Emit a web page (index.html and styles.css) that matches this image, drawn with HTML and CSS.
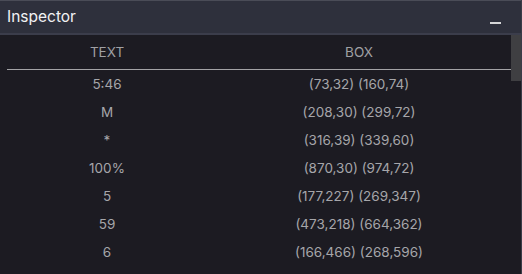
FILE: index.html
```html
<!DOCTYPE html>
<html>
<head>
<meta charset="utf-8">
<link rel="stylesheet" href="styles.css">
</head>
<body>
<div class="panel">
  <div class="titlebar">
    <span class="title">Inspector</span>
    <span class="minimize"></span>
  </div>
  <div class="body">
    <div class="scroll">
      <table class="grid">
        <thead>
          <tr><th class="c1">TEXT</th><th class="c2">BOX</th></tr>
        </thead>
        <tbody>
          <tr><td>5:46</td><td>(73,32) (160,74)</td></tr>
          <tr><td>M</td><td>(208,30) (299,72)</td></tr>
          <tr><td>*</td><td>(316,39) (339,60)</td></tr>
          <tr><td>100%</td><td>(870,30) (974,72)</td></tr>
          <tr><td>5</td><td>(177,227) (269,347)</td></tr>
          <tr><td>59</td><td>(473,218) (664,362)</td></tr>
          <tr><td>6</td><td>(166,466) (268,596)</td></tr>
        </tbody>
      </table>
    </div>
    <div class="scrollbar"><div class="thumb"></div></div>
  </div>
</div>
</body>
</html>
```

FILE: styles.css
```css
html, body {
  margin: 0;
  padding: 0;
  background: #1c1b22;
  width: 522px;
  height: 274px;
  overflow: hidden;
}
.panel {
  width: 521px;
  height: 274px;
  border-right: 1px solid #3a3c48;
  display: flex;
  flex-direction: column;
  font-family: Inter, "Noto Sans", sans-serif;
}
.titlebar {
  height: 32px;
  border-top: 1px solid #4a4c57;
  border-bottom: 2px solid #3b3d4b;
  background: #2e303c;
  display: flex;
  align-items: center;
  justify-content: space-between;
  padding: 0 20px 0 7px;
  flex: none;
}
.title {
  color: #f2f2f4;
  font-size: 15.5px;
  margin-top: -1px;
}
.minimize {
  width: 11px;
  height: 2px;
  background: #d6d6d8;
  margin-top: 12px;
}
.body {
  flex: 1;
  display: flex;
  background: #1c1b22;
}
.scroll {
  flex: 1;
  padding-left: 7px;
}
.grid {
  width: 504px;
  border-collapse: collapse;
  color: #a6a6aa;
  font-size: 13.5px;
}
.grid th {
  font-weight: 400;
  height: 34px;
  border-bottom: 1px solid #a3a3a6;
  padding: 0;
  color: #a0a0a4;
}
.grid .c1 { width: 200px; }
.grid td {
  height: 28px;
  text-align: center;
  padding: 0;
}
.scrollbar {
  width: 14px;
  flex: none;
  position: relative;
}
.thumb {
  position: absolute;
  left: 0;
  top: 0;
  width: 10px;
  height: 46px;
  background: #3f3f42;
}
```
